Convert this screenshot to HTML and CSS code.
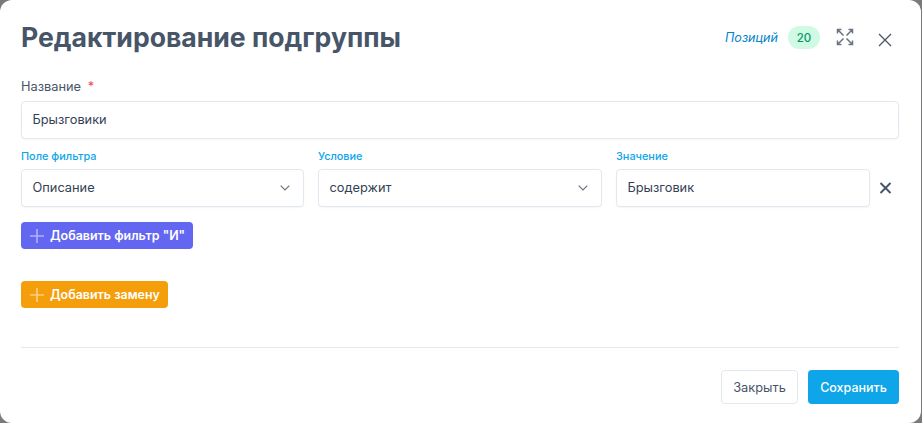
FILE: index.html
```html
<!DOCTYPE html>
<html lang="ru">
<head>
<meta charset="utf-8">
<title>Редактирование подгруппы</title>
<link rel="stylesheet" href="styles.css">
</head>
<body>
<div class="modal">
  <header class="head">
    <h1 class="title">Редактирование подгруппы</h1>
    <div class="tools">
      <em class="count-label">Позиций</em>
      <span class="badge">20</span>
      <svg class="expand" width="18" height="18" viewBox="0 0 18 18" fill="none" stroke="#6b7280" stroke-width="1.500"><path d="M1.500 5.500v-4h4M1.500 1.500l6 6M12.500 1.500h4v4M16.500 1.500l-6 6M1.500 12.500v4h4M1.500 16.500l6-6M12.500 16.500h4v-4M16.500 16.500l-6-6"/></svg>
      <svg class="close" width="14" height="14" viewBox="0 0 14 14" fill="none" stroke="#4b5563" stroke-width="1.300"><path d="M1 1l12 12M13 1L1 13"/></svg>
    </div>
  </header>
  <label class="name-label">Название <span class="req">*</span></label>
  <div class="field name-field">Брызговики</div>
  <div class="filter-row">
    <div class="col col-first">
      <div class="small-label">Поле фильтра</div>
      <div class="field select">Описание<svg width="10" height="6" viewBox="0 0 10 6" fill="none" stroke="#6b7280" stroke-width="1.200"><path d="M.7.700L5 5 9.300.700"/></svg></div>
    </div>
    <div class="col">
      <div class="small-label">Условие</div>
      <div class="field select">содержит<svg width="10" height="6" viewBox="0 0 10 6" fill="none" stroke="#6b7280" stroke-width="1.200"><path d="M.7.700L5 5 9.300.700"/></svg></div>
    </div>
    <div class="col col-value">
      <div class="small-label">Значение</div>
      <div class="field">Брызговик</div>
    </div>
    <svg class="remove" width="13" height="12" viewBox="0 0 13 12" fill="none" stroke="#475569" stroke-width="2"><path d="M1.500 1l10 10M11.500 1l-10 10"/></svg>
  </div>
  <button class="btn btn-add indigo"><svg width="16" height="16" viewBox="0 0 16 16" fill="none" stroke="#fff" stroke-opacity=".5" stroke-width="1.600"><path d="M8 1v14M1 8h14"/></svg>Добавить фильтр "И"</button>
  <button class="btn btn-add amber"><svg width="16" height="16" viewBox="0 0 16 16" fill="none" stroke="#fff" stroke-opacity=".5" stroke-width="1.600"><path d="M8 1v14M1 8h14"/></svg>Добавить замену</button>
  <footer class="foot">
    <button class="btn ghost">Закрыть</button>
    <button class="btn primary">Сохранить</button>
  </footer>
</div>
</body>
</html>
```
FILE: styles.css
```css
* { box-sizing: border-box; }
html, body { margin: 0; height: 100%; }
body { background: #7a7a7a; font-family: Inter, "Liberation Sans", sans-serif; overflow: hidden; }
.modal { width: 921px; height: 423px; background: #fff; border-radius: 12px; padding: 0 22px 0 21px; display: flex; flex-direction: column; align-items: stretch; }
.head { display: flex; justify-content: space-between; align-items: center; height: 75px; }
.title { margin: -1px 0 0; font-size: 26.600px; line-height: 32px; font-weight: 700; color: #475569; }
.tools { display: flex; align-items: center; }
.count-label { font-size: 12.600px; color: #0284c7; margin-right: 10px; }
.badge { width: 32px; height: 23px; border-radius: 12px; background: #d1fae5; color: #059669; font-size: 11.500px; font-weight: 500; display: flex; align-items: center; justify-content: center; margin-right: 16px; }
.expand { margin: -1px 24px 0 0; }
.close { margin: 4px 7px 0 0; }
.name-label { font-size: 12.800px; line-height: 20px; color: #475569; margin-top: 2px; }
.req { color: #f43f5e; margin-left: 3px; }
.field { height: 38px; border: 1px solid #e2e8f0; border-radius: 4px; background: #fff; padding: 0 10.500px 2px; display: flex; align-items: center; justify-content: space-between; font-size: 12.800px; color: #334155; box-shadow: 0 1px 2px rgba(0,0,0,.04); }
.name-field { margin-top: 4px; }
.filter-row { display: flex; align-items: flex-end; gap: 14px; margin-top: 9px; }
.col { flex: 0 0 284px; }
.col-first { flex-basis: 283px; }
.col-value { flex: 1 1 0; margin-right: -5px; }
.small-label { font-size: 10.900px; line-height: 16px; font-weight: 500; color: #0ea5e9; margin-bottom: 5px; }
.select svg { margin: 2px 3px 0 0; }
.remove { flex: none; margin: 0 7px 13px 0; }
.btn { font-family: inherit; border: 0; border-radius: 4px; cursor: pointer; }
.btn-add { align-self: flex-start; height: 27px; padding: 0 8px; display: flex; align-items: center; gap: 5px; color: #fff; font-size: 12.450px; font-weight: 600; }
.indigo { background: #6366f1; margin-top: 15px; }
.amber { background: #f59e0b; margin-top: 32px; }
.foot { margin-top: 39px; border-top: 1px solid #e2e8f0; padding-top: 22px; display: flex; justify-content: flex-end; gap: 10px; }
.ghost { width: 77px; height: 34px; background: #fff; border: 1px solid #e2e8f0; color: #475569; font-size: 12.800px; }
.primary { width: 91px; height: 34px; background: #0ea5e9; color: #fff; font-size: 12.500px; font-weight: 500; }
```
